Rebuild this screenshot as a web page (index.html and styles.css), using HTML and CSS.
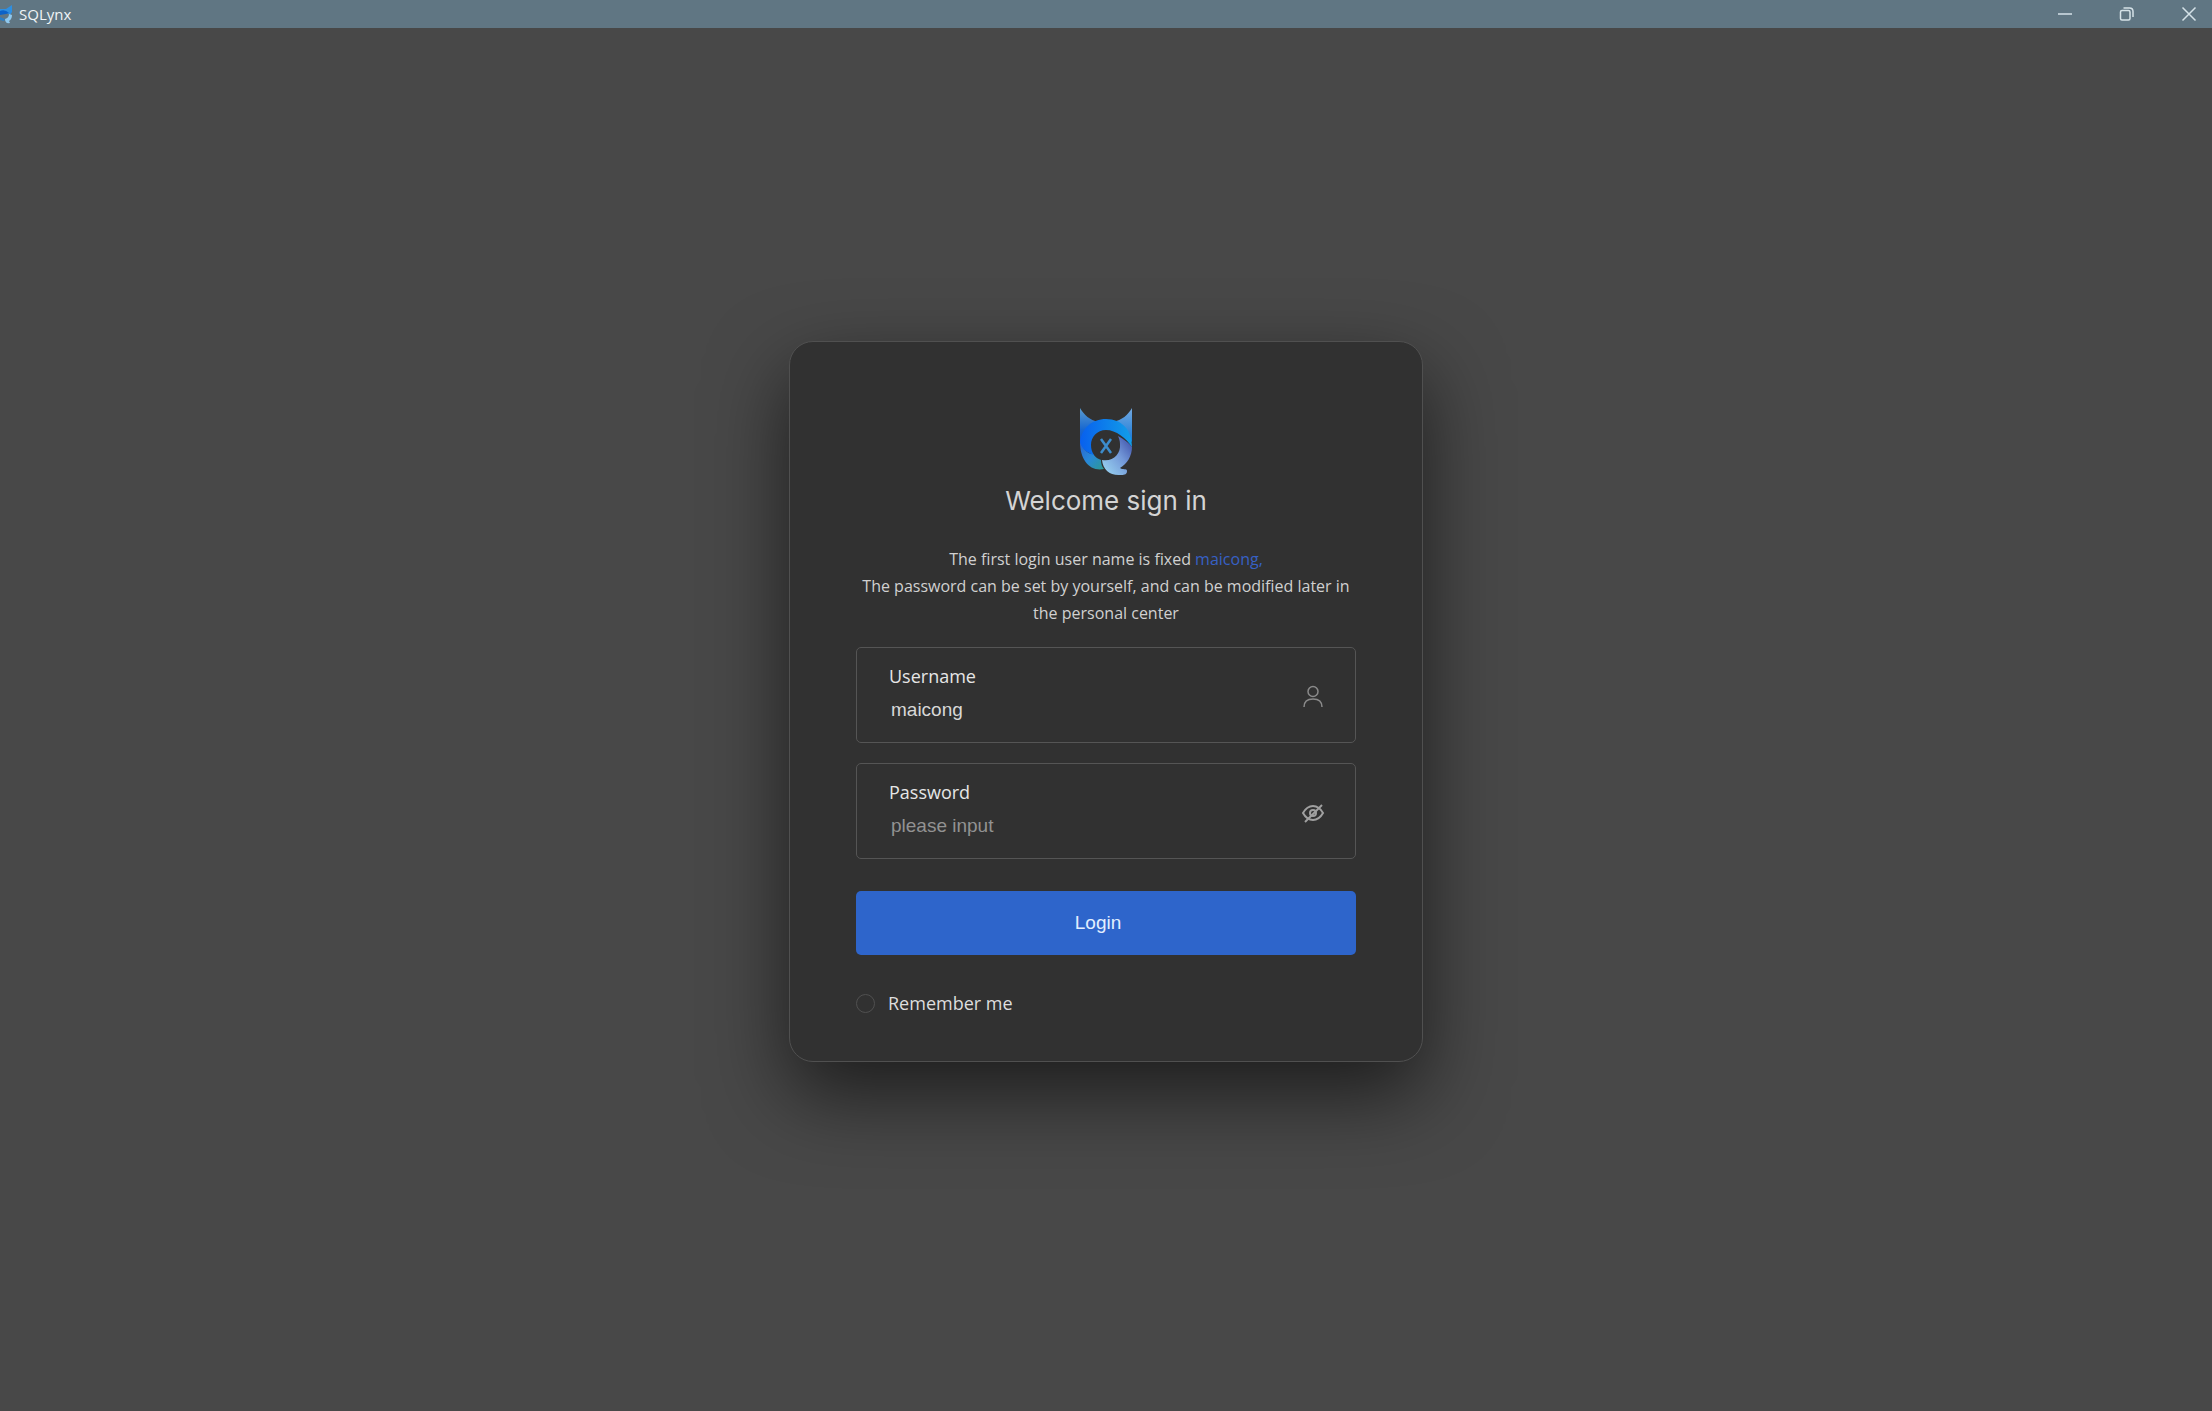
FILE: index.html
```html
<!DOCTYPE html>
<html lang="en">

<head>
    <meta charset="UTF-8">
    <meta name="viewport" content="width=device-width, initial-scale=1.0">
    <title>SQLynx</title>
    <link rel="stylesheet" href="styles.css">
</head>

<body>

    <header class="titlebar">
        <div class="app-name">
            <svg class="app-icon" viewBox="0 0 12 20" aria-hidden="true">
                <path d="M0 5L6 5 12 1V8L10 11 5 8 0 9Z" fill="#2f8fe0" />
                <path d="M0 7Q5 5 9 9L6 10 0 11Z" fill="#0c62c8" />
                <path d="M0 13L5 15 4 17 0 16Z" fill="#2a7fc8" />
                <path d="M5 15Q9 14 9 10L12 11Q12 15 9 17L10 19Q5 20 5 15Z" fill="#8ec8ee" />
            </svg>
            <span>SQLynx</span>
        </div>
        <div class="window-buttons">
            <button type="button" aria-label="Minimize">
                <svg viewBox="0 0 16 16"><path d="M1 8h14" /></svg>
            </button>
            <button type="button" aria-label="Restore">
                <svg viewBox="0 0 16 16">
                    <rect x="1.500" y="4.500" width="9.500" height="9.500" rx="1.500" />
                    <path d="M4.500 2h6q3.500 0 3.500 3.500v5.500" />
                </svg>
            </button>
            <button type="button" aria-label="Close">
                <svg viewBox="0 0 16 16"><path d="M1.500 1.500l13 13M14.500 1.500l-13 13" /></svg>
            </button>
        </div>
    </header>

    <main class="page">
        <form class="card">
            <svg class="logo" viewBox="0 0 54 68" aria-hidden="true">
                <defs>
                    <linearGradient id="earLeft" x1="0" y1="0" x2="0" y2="1">
                        <stop offset="0" stop-color="#5a9bd0" />
                        <stop offset="0.600" stop-color="#1767d0" />
                        <stop offset="1" stop-color="#0d56d4" />
                    </linearGradient>
                    <linearGradient id="earRight" x1="0" y1="0" x2="0" y2="1">
                        <stop offset="0" stop-color="#72a9e0" />
                        <stop offset="1" stop-color="#1678d8" />
                    </linearGradient>
                    <linearGradient id="arcTop" x1="0" y1="0" x2="1" y2="0">
                        <stop offset="0" stop-color="#0860ee" />
                        <stop offset="1" stop-color="#129ee8" />
                    </linearGradient>
                    <linearGradient id="arcLeft" x1="0" y1="0" x2="1" y2="1">
                        <stop offset="0" stop-color="#2a62cc" />
                        <stop offset="0.500" stop-color="#2888d8" />
                        <stop offset="1" stop-color="#2e9a90" />
                    </linearGradient>
                    <linearGradient id="tail" x1="1" y1="0" x2="0" y2="1">
                        <stop offset="0" stop-color="#3748a4" />
                        <stop offset="0.450" stop-color="#7398d8" />
                        <stop offset="1" stop-color="#9edbf4" />
                    </linearGradient>
                </defs>
                <path d="M1 0C5 7 11 12 19 14L12 30 1 36Z" fill="url(#earLeft)" />
                <path d="M53 0C49 7 43 12 34 14L42 25 53 34Z" fill="url(#earRight)" />
                <path d="M1 34C5 42 9 46 14 46C17 50 20 51 22 52C22 56 23 59 25 61C11 64 1 52 1 34Z" fill="url(#arcLeft)" />
                <path d="M1 34C3 20 13 11 27 11C43 11 53 22 53 39C47 30 37 22 27 22C18 22 12 29 12 37C12 41 13 44 15 47C8 45 3 41 1 34Z" fill="url(#arcTop)" />
                <path d="M39 28C45 31 50 35 53 39C53 48 48 56 41 60C43 62 48 60 48 63C48 66 46 67 42 67C31 68 24 62 23 52C34 54 42 46 41 36C41 33 40 30 39 28Z" fill="url(#tail)" />
                <path d="M22 31L32 45M32 31L22 45" fill="none" stroke="#3c8ccc" stroke-width="2.500" />
            </svg>
            <h1 class="title">Welcome sign in</h1>
            <p class="hint">
                The first login user name is fixed <span class="hint-name">maicong,</span><br>
                The password can be set by yourself, and can be modified later in the personal center
            </p>

            <div class="field">
                <div class="field-text">
                    <label for="username">Username</label>
                    <input id="username" type="text" value="maicong">
                </div>
                <svg class="field-icon" viewBox="0 0 24 24" aria-hidden="true">
                    <circle cx="12" cy="6.500" r="5" />
                    <path d="M3 22q0-8 9-8t9 8" />
                </svg>
            </div>

            <div class="field">
                <div class="field-text">
                    <label for="password">Password</label>
                    <input id="password" type="password" placeholder="please input">
                </div>
                <button type="button" aria-label="Show password">
                    <svg class="field-icon eye-icon" viewBox="0 0 24 24">
                        <path d="M2 12q4-7 10-7t10 7q-4 7-10 7t-10-7z" />
                        <circle cx="12" cy="12" r="3" />
                        <path d="M4 21L21 4" />
                    </svg>
                </button>
            </div>

            <button class="login" type="submit">Login</button>

            <label class="remember">
                <input type="checkbox">
                <span>Remember me</span>
            </label>
        </form>
    </main>

</body>

</html>
```

FILE: styles.css
```css
* {
    box-sizing: border-box;
}

body {
    margin: 0;
    min-height: 100vh;
    display: flex;
    flex-direction: column;
    background-color: #484848;
    color: #dedede;
    font-family: "Open Sans", "Noto Sans", sans-serif;
}

button {
    border: 0;
    padding: 0;
    background: none;
}

.titlebar {
    height: 28px;
    display: flex;
    align-items: center;
    justify-content: space-between;
    background-color: #607683;
}

.app-name {
    display: flex;
    align-items: center;
    gap: 7px;
    color: #f0f4f6;
    font-size: 15px;
    line-height: 20px;
}

.app-icon {
    width: 12px;
    height: 20px;
}

.window-buttons {
    display: flex;
}

.window-buttons button {
    width: 62px;
    height: 26px;
    display: flex;
    align-items: center;
    justify-content: center;
}

.window-buttons button:last-child {
    width: 46px;
    margin-left: 8px;
}

.window-buttons svg {
    width: 16px;
    height: 16px;
    fill: none;
    stroke: #d5e2e8;
    stroke-width: 1.5;
}

.page {
    flex: 1;
    display: flex;
    align-items: center;
    justify-content: center;
    padding-bottom: 36px;
}

.card {
    width: 100%;
    max-width: 634px;
    display: flex;
    flex-direction: column;
    padding: 66px 66px 45px;
    border: 1px solid #505050;
    border-radius: 24px;
    background-color: #313131;
    box-shadow: 0 32px 80px rgba(0, 0, 0, 0.6);
}

.logo {
    width: 54px;
    height: 68px;
    align-self: center;
}

.title {
    margin: 8px 0 28px;
    font-family: Inter, "Liberation Sans", sans-serif;
    font-size: 26px;
    font-weight: 400;
    line-height: 34px;
    text-align: center;
    color: #d4d4d4;
}

.hint {
    margin: 0 0 20px;
    font-size: 16px;
    line-height: 27px;
    text-align: center;
    color: #d0d0d0;
}

.hint-name {
    color: #3760c4;
}

.field {
    height: 96px;
    display: flex;
    align-items: center;
    justify-content: space-between;
    margin-bottom: 20px;
    padding: 0 30px 0 32px;
    border: 1px solid #555;
    border-radius: 5px;
}

.field-text {
    flex: 1;
    display: flex;
    flex-direction: column;
    gap: 8px;
    padding-bottom: 4px;
}

.field label {
    font-size: 18px;
    line-height: 26px;
    color: #e6e6e6;
}

.field input {
    width: 100%;
    height: 26px;
    padding: 0 2px;
    border: 0;
    outline: 0;
    background: none;
    font-family: "Liberation Sans", Arial, sans-serif;
    font-size: 19px;
    color: #d8d8d8;
}

.field input::placeholder {
    color: #929292;
    opacity: 1;
}

.field-icon {
    display: block;
    width: 24px;
    height: 24px;
    margin-top: 4px;
    fill: none;
    stroke: #8a8a8a;
    stroke-width: 1.5;
}

.eye-icon {
    stroke: #a0a0a0;
    stroke-width: 2;
}

.login {
    height: 64px;
    margin-top: 12px;
    padding-right: 16px;
    border-radius: 5px;
    background-color: #2e65cb;
    color: #e2efff;
    font-family: "Liberation Sans", Arial, sans-serif;
    font-size: 19px;
}

.remember {
    display: flex;
    align-items: center;
    align-self: flex-start;
    gap: 13px;
    margin-top: 35px;
    font-size: 18px;
    line-height: 26px;
}

.remember input {
    appearance: none;
    width: 19px;
    height: 19px;
    margin: 0;
    border: 1px solid #505050;
    border-radius: 50%;
}

.remember input:checked {
    background-color: #2e65cb;
}
```
